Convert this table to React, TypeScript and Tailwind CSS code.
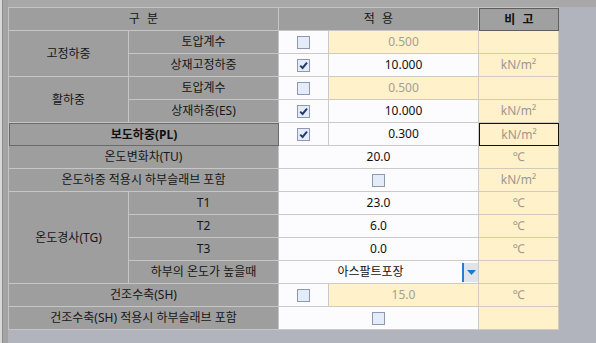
import React from "react";

const L = "bg-[#9e9e9e] border-r border-b border-[#c6c6c6] flex items-center justify-center text-[#161616]";
const W = "bg-[#fcfbfe] border-r border-b border-[#cbcac6] flex items-center justify-center";
const Y = "bg-[#fff1c9] border-r border-b border-[#d0cbbd] flex items-center justify-center";
const TXT = "text-[#111]";
const UNIT = "text-[#9d978c]";
const DIS = "text-[#a39f97]";
const SP = "\u2002\u200A";

function Cb({ checked }: { checked?: boolean }) {
  return (
    <span className="w-[13px] h-[13px] box-border border border-[#8d99b1] bg-[#e5ecf9] flex items-center justify-center">
      {checked && (
        <svg width="9" height="9" viewBox="0 0 9 9">
          <path d="M1.2 4.6 L3.6 7 L8 1.6" fill="none" stroke="#27396f" strokeWidth="2" />
        </svg>
      )}
    </span>
  );
}

export default function App() {
  return (
    <div className="w-[596px] h-[343px] flex bg-[#b1b4bc] overflow-hidden font-['Noto_Sans','Noto_Sans_CJK_KR',sans-serif] text-[12px] leading-none">
      <div className="w-[8px] h-full flex shrink-0">
        <div className="w-[2px] bg-[#d9d9d9]" />
        <div className="w-px bg-[#8c8c8c]" />
        <div className="flex-1 bg-[#a3a3a3]" />
      </div>
      <div className="flex-1 flex flex-col">
        <div className="h-[7px] bg-[#a8a8a8] shrink-0" />
        <div className="grid grid-cols-[120px_150px_50px_150px_80px] grid-rows-[repeat(14,23px)] w-max border-t border-l border-[#c4c4c4]">
          {/* header */}
          <div className={`${L} col-start-1 col-span-2 row-start-1`}>{`구${SP}분`}</div>
          <div className={`${L} col-start-3 col-span-2 row-start-1`}>{`적${SP}용`}</div>
          <div className="col-start-5 row-start-1 bg-[#a0a0a0] border border-[#5f5f5f] flex items-center justify-center font-bold text-[#111]">{`비${SP}고`}</div>

          {/* 고정하중 */}
          <div className={`${L} col-start-1 row-start-2 row-span-2`}>고정하중</div>
          <div className={`${L} col-start-2 row-start-2`}>토압계수</div>
          <div className={`${W} col-start-3 row-start-2`}><Cb /></div>
          <div className={`${Y} col-start-4 row-start-2 ${DIS}`}>0.500</div>
          <div className={`${Y} col-start-5 row-start-2`} />

          <div className={`${L} col-start-2 row-start-3`}>상재고정하중</div>
          <div className={`${W} col-start-3 row-start-3`}><Cb checked /></div>
          <div className={`${W} col-start-4 row-start-3 ${TXT}`}>10.000</div>
          <div className={`${Y} col-start-5 row-start-3 ${UNIT}`}>kN/m²</div>

          {/* 활하중 */}
          <div className={`${L} col-start-1 row-start-4 row-span-2`}>활하중</div>
          <div className={`${L} col-start-2 row-start-4`}>토압계수</div>
          <div className={`${W} col-start-3 row-start-4`}><Cb /></div>
          <div className={`${Y} col-start-4 row-start-4 ${DIS}`}>0.500</div>
          <div className={`${Y} col-start-5 row-start-4`} />

          <div className={`${L} col-start-2 row-start-5`}>상재하중(ES)</div>
          <div className={`${W} col-start-3 row-start-5`}><Cb checked /></div>
          <div className={`${W} col-start-4 row-start-5 ${TXT}`}>10.000</div>
          <div className={`${Y} col-start-5 row-start-5 ${UNIT}`}>kN/m²</div>

          {/* 보도하중 */}
          <div className="col-start-1 col-span-2 row-start-6 bg-[#9e9e9e] border border-[#6a6a6a] flex items-center justify-center font-bold text-[#111]">보도하중(PL)</div>
          <div className={`${W} col-start-3 row-start-6`}><Cb checked /></div>
          <div className={`${W} col-start-4 row-start-6 ${TXT}`}>0.300</div>
          <div className={`col-start-5 row-start-6 bg-[#fff1c9] border border-[#111] flex items-center justify-center ${UNIT}`}>kN/m²</div>

          {/* 온도변화차 */}
          <div className={`${L} col-start-1 col-span-2 row-start-7`}>온도변화차(TU)</div>
          <div className={`${W} col-start-3 col-span-2 row-start-7 ${TXT}`}>20.0</div>
          <div className={`${Y} col-start-5 row-start-7 ${UNIT}`}>℃</div>

          <div className={`${L} col-start-1 col-span-2 row-start-8`}>온도하중 적용시 하부슬래브 포함</div>
          <div className={`${W} col-start-3 col-span-2 row-start-8`}><Cb /></div>
          <div className={`${Y} col-start-5 row-start-8 ${UNIT}`}>kN/m²</div>

          {/* 온도경사 */}
          <div className={`${L} col-start-1 row-start-9 row-span-4`}>온도경사(TG)</div>
          <div className={`${L} col-start-2 row-start-9`}>T1</div>
          <div className={`${W} col-start-3 col-span-2 row-start-9 ${TXT}`}>23.0</div>
          <div className={`${Y} col-start-5 row-start-9 ${UNIT}`}>℃</div>

          <div className={`${L} col-start-2 row-start-10`}>T2</div>
          <div className={`${W} col-start-3 col-span-2 row-start-10 ${TXT}`}>6.0</div>
          <div className={`${Y} col-start-5 row-start-10 ${UNIT}`}>℃</div>

          <div className={`${L} col-start-2 row-start-11`}>T3</div>
          <div className={`${W} col-start-3 col-span-2 row-start-11 ${TXT}`}>0.0</div>
          <div className={`${Y} col-start-5 row-start-11 ${UNIT}`}>℃</div>

          <div className={`${L} col-start-2 row-start-12`}>하부의 온도가 높을때</div>
          <div className="col-start-3 col-span-2 row-start-12 bg-[#fcfbfe] border-r border-b border-[#cbcac6] flex items-stretch">
            <div className="flex-1 flex items-center justify-center text-[#111]">아스팔트포장</div>
            <div className="w-[16px] mt-[2px] mb-px border-l-2 border-[#2a7bd2] bg-[#dfe3ea] flex items-center justify-center">
              <svg width="9" height="5" viewBox="0 0 9 5">
                <path d="M0 0 H9 L4.5 5 Z" fill="#1f78cf" />
              </svg>
            </div>
          </div>
          <div className={`${Y} col-start-5 row-start-12`} />

          {/* 건조수축 */}
          <div className={`${L} col-start-1 col-span-2 row-start-13`}>건조수축(SH)</div>
          <div className={`${W} col-start-3 row-start-13`}><Cb /></div>
          <div className={`${Y} col-start-4 row-start-13 ${DIS}`}>15.0</div>
          <div className={`${Y} col-start-5 row-start-13 ${UNIT}`}>℃</div>

          <div className={`${L} col-start-1 col-span-2 row-start-14`}>건조수축(SH) 적용시 하부슬래브 포함</div>
          <div className={`${W} col-start-3 col-span-2 row-start-14`}><Cb /></div>
          <div className={`${Y} col-start-5 row-start-14`} />
        </div>
      </div>
    </div>
  );
}
